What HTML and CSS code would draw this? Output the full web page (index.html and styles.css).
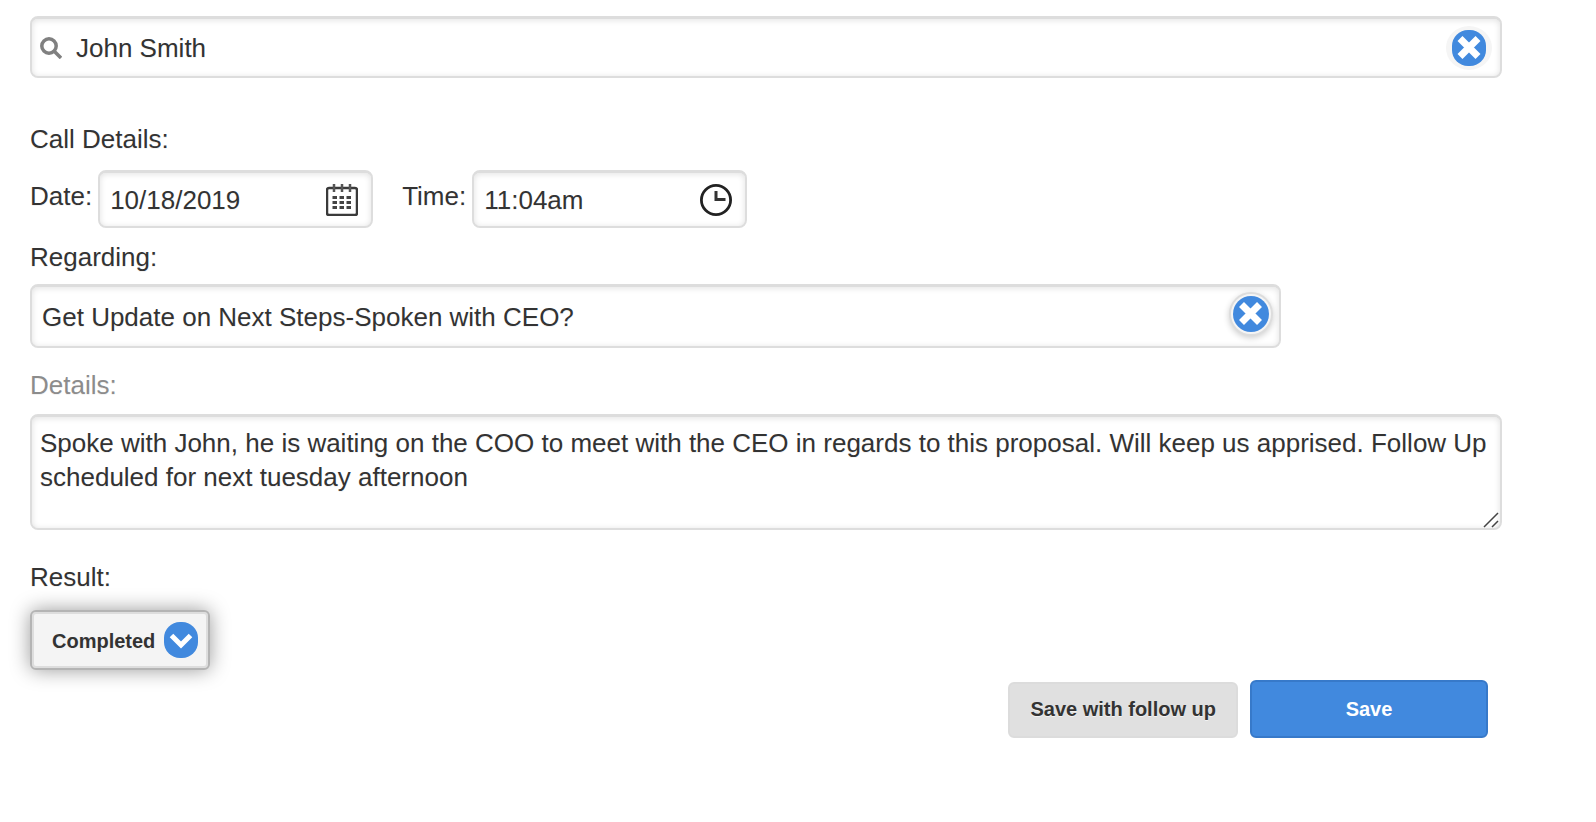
FILE: index.html
```html
<!DOCTYPE html>
<html lang="en">
<head>
    <meta charset="UTF-8">
    <meta name="viewport" content="width=device-width, initial-scale=1.0">
    <title>Call Details</title>
    <link rel="stylesheet" href="styles.css">
</head>
<body>
    <form class="call-form">
        <div class="field search-field">
            <svg class="search-icon" viewBox="0 0 22 22" aria-hidden="true">
                <circle cx="9" cy="9" r="7.200" fill="none" stroke="#808080" stroke-width="3.500"/>
                <path d="M14 14l7 7" stroke="#808080" stroke-width="3.500"/>
            </svg>
            <input class="field-input" type="text" value="John Smith" aria-label="Contact">
            <button class="clear-button" type="button" aria-label="Clear contact">
                <svg class="clear-icon narrow" viewBox="0 0 34 36" aria-hidden="true">
                    <rect width="34" height="36" rx="16" fill="#4189de"/>
                    <path d="M8 8.500l18 18M26 8.500l-18 18" stroke="#fff" stroke-width="7"/>
                </svg>
            </button>
        </div>

        <h2 class="form-heading">Call Details:</h2>

        <div class="date-row">
            <div class="date-group">
                <label class="form-label" for="date">Date:</label>
                <div class="field">
                    <input class="field-input" id="date" type="text" value="10/18/2019">
                    <svg class="field-icon" viewBox="0 0 32 32" aria-hidden="true">
                        <rect x="1" y="4" width="30" height="27" rx="2" fill="#fff" stroke="#3a3a3a" stroke-width="2.500"/>
                        <path d="M8 0v8M16 0v8M24 0v8" stroke="#555" stroke-width="2.500"/>
                        <path d="M6.500 13.500h19M6.500 18.500h19M6.500 23.500h19" stroke="#444" stroke-width="3" stroke-dasharray="4.500 2.500"/>
                    </svg>
                </div>
            </div>
            <div class="date-group">
                <label class="form-label" for="time">Time:</label>
                <div class="field">
                    <input class="field-input" id="time" type="text" value="11:04am">
                    <svg class="field-icon" viewBox="0 0 32 32" aria-hidden="true">
                        <circle cx="16" cy="16" r="14.600" fill="none" stroke="#222" stroke-width="2.800"/>
                        <path d="M16 7v8.500h9.500" fill="none" stroke="#333" stroke-width="3"/>
                    </svg>
                </div>
            </div>
        </div>

        <label class="form-label" for="regarding">Regarding:</label>
        <div class="field regarding-field">
            <input class="field-input" id="regarding" type="text" value="Get Update on Next Steps-Spoken with CEO?">
            <button class="clear-button raised" type="button" aria-label="Clear regarding">
                <svg class="clear-icon" viewBox="0 0 36 36" aria-hidden="true">
                    <circle cx="18" cy="18" r="18" fill="#4189de"/>
                    <path d="M8.500 8.500l18 18M26.500 8.500l-18 18" stroke="#fff" stroke-width="7"/>
                </svg>
            </button>
        </div>

        <label class="form-label details-label" for="details">Details:</label>
        <div class="details-field">
            <textarea class="details-input" id="details">Spoke with John, he is waiting on the COO to meet with the CEO in regards to this proposal. Will keep us apprised. Follow Up scheduled for next tuesday afternoon</textarea>
            <svg class="resize-grip" viewBox="0 0 16 16" aria-hidden="true">
                <path d="M1 15L15 1M9 15l6-6" stroke="#444" stroke-width="1.500"/>
            </svg>
        </div>

        <label class="form-label" for="result">Result:</label>
        <div class="result-select">
            <select id="result">
                <option>Completed</option>
            </select>
            <svg class="arrow-icon" viewBox="0 0 34 36" aria-hidden="true">
                <rect width="34" height="36" rx="16" fill="#4189de"/>
                <path d="M7.500 13.500l9.500 9.500 9.500-9.500" fill="none" stroke="#fff" stroke-width="5"/>
            </svg>
        </div>

        <div class="actions">
            <button class="button" type="button">Save with follow up</button>
            <button class="button primary" type="submit">Save</button>
        </div>
    </form>
</body>
</html>
```

FILE: styles.css
```css
* {
    box-sizing: border-box;
}

body {
    margin: 0;
    background: #fff;
    color: #333;
    font-family: "Liberation Sans", Arial, sans-serif;
    font-size: 26px;
    line-height: 32px;
    text-shadow: 0 1px 0 #f3f3f3;
}

input,
textarea,
select,
button {
    margin: 0;
    font-family: inherit;
    color: inherit;
    text-shadow: inherit;
}

.call-form {
    display: flex;
    flex-direction: column;
    align-items: stretch;
    padding: 16px 94px 16px 30px;
}

/* Bordered boxes */
.field,
.details-input {
    border: 2px solid #ddd;
    border-top-width: 3px;
    border-radius: 8px;
    background: #fff;
    box-shadow: inset 0 1px 6px rgba(0, 0, 0, 0.12);
}

.field {
    display: flex;
    align-items: center;
    height: 58px;
    padding: 0 12px 0 8px;
}

.field-input {
    flex: 1;
    width: 100%;
    min-width: 0;
    height: 32px;
    padding: 0 2px;
    border: 0;
    outline: 0;
    background: none;
    font-size: 26px;
    line-height: 32px;
}

.field-icon {
    flex: none;
    width: 32px;
    height: 32px;
}

.search-field {
    height: 62px;
    padding-right: 8px;
}

.search-icon {
    flex: none;
    width: 22px;
    height: 22px;
    margin-right: 12px;
}

.form-heading {
    margin: 45px 0 15px;
    font-size: 26px;
    font-weight: normal;
}

/* Date and time */
.date-row {
    display: flex;
    gap: 29px;
    margin-bottom: 13px;
}

.date-group {
    display: flex;
    align-items: center;
    gap: 6px;
}

.date-group .form-label {
    padding-bottom: 6px;
}

.date-group .field {
    width: 275px;
    padding-right: 13px;
}

.regarding-field {
    width: 85%;
    height: 64px;
    margin: 11px 0 21px;
    padding-right: 6px;
}

/* Round clear buttons */
.clear-button {
    display: flex;
    flex: none;
    align-items: center;
    justify-content: center;
    width: 46px;
    height: 44px;
    padding: 0;
    border: 0;
    border-radius: 50%;
    background: #f5f5f5;
    cursor: pointer;
}

.clear-button.raised {
    width: 44px;
    border: 2px solid #ddd;
    margin-bottom: 6px;
    box-shadow: 0 2px 6px rgba(0, 0, 0, 0.2);
}

.clear-icon {
    flex: none;
    width: 36px;
    height: 36px;
}

.clear-icon.narrow {
    width: 34px;
}

/* Details */
.details-label {
    color: #8c8c8c;
}

.details-field {
    position: relative;
    margin: 13px 0 31px;
}

.details-input {
    display: block;
    width: 100%;
    height: 116px;
    padding: 9px 8px;
    outline: 0;
    resize: none;
    overflow: hidden;
    font-size: 26px;
    line-height: 34px;
}

.resize-grip {
    position: absolute;
    right: 3px;
    bottom: 2px;
    width: 16px;
    height: 16px;
}

/* Result drop-down */
.result-select {
    position: relative;
    align-self: flex-start;
    margin: 17px 0 10px;
}

.result-select select {
    display: block;
    width: 180px;
    height: 60px;
    padding: 2px 46px 0 20px;
    appearance: none;
    border: 2px solid #b4b4b4;
    border-radius: 6px;
    outline: 0;
    background: #f4f4f4;
    box-shadow: inset 0 0 0 2px #ddd, 0 0 20px rgba(0, 0, 0, 0.4);
    font-size: 20px;
    font-weight: bold;
}

.arrow-icon {
    position: absolute;
    top: 12px;
    right: 12px;
    width: 34px;
    height: 36px;
    pointer-events: none;
}

/* Buttons */
.actions {
    display: flex;
    align-items: flex-end;
    justify-content: flex-end;
    gap: 12px;
    padding-right: 14px;
}

.button {
    height: 56px;
    padding: 0 20px 2px;
    border: 2px solid #dcdcdc;
    border-radius: 6px;
    background: #e0e0e0;
    font-size: 20px;
    font-weight: bold;
    cursor: pointer;
}

.button.primary {
    width: 238px;
    height: 58px;
    padding-bottom: 0;
    border-color: #3779c9;
    background: #4189de;
    color: #fff;
    text-shadow: none;
}
```
